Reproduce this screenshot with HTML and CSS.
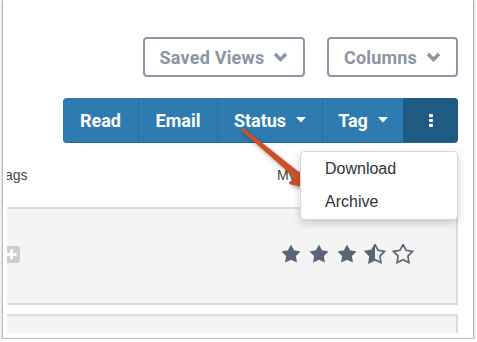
FILE: index.html
```html
<!DOCTYPE html>
<html lang="en">
<head>
  <meta charset="UTF-8">
  <meta name="viewport" content="width=device-width, initial-scale=1.0">
  <title>Responses</title>
  <link rel="stylesheet" href="styles.css">
</head>
<body>
  <div class="window">
    <div class="views">
      <button class="btn-outline saved">Saved Views
        <svg class="chev" width="15" height="10" viewBox="0 0 15 10"><polyline points="2,2 7.5,7.5 13,2"/></svg>
      </button>
      <button class="btn-outline cols">Columns
        <svg class="chev" width="15" height="10" viewBox="0 0 15 10"><polyline points="2,2 7.5,7.5 13,2"/></svg>
      </button>
    </div>

    <div class="actions">
      <div class="action-group">
        <div class="action read">Read</div>
        <div class="action email">Email</div>
        <div class="action status">Status
          <svg width="10" height="6" viewBox="0 0 10 6"><polygon points="0,0 10,0 5,5.5" fill="#fff"/></svg>
        </div>
        <div class="action tag">Tag
          <svg width="10" height="6" viewBox="0 0 10 6"><polygon points="0,0 10,0 5,5.5" fill="#fff"/></svg>
        </div>
        <div class="action more">
          <svg width="4" height="13" viewBox="0 0 4 13"><rect x="0" y="0" width="4" height="3.2" rx="0.8"/><rect x="0" y="4.9" width="4" height="3.2" rx="0.8"/><rect x="0" y="9.8" width="4" height="3.2" rx="0.8"/></svg>
        </div>
      </div>
      <ul class="menu">
        <li>Download</li>
        <li>Archive</li>
      </ul>
    </div>

    <div class="table">
      <div class="thead">
        <div class="col-tags">Tags</div>
        <div class="col-rating">My Rating</div>
      </div>
      <div class="row">
        <div class="col-tags">
          <svg class="add" width="17" height="17" viewBox="0 0 17 17"><rect width="17" height="17" rx="3" fill="#cdcdcd"/><path d="M8.5 3.5v10M3.5 8.5h10" stroke="#fff" stroke-width="3"/></svg>
        </div>
        <div class="col-rating">
          <svg class="stars" width="134" height="20" viewBox="0 0 134 20">
            <defs>
              <polygon id="star" points="10,0.5 13.06,6.29 19.51,7.41 14.95,12.11 15.88,18.59 10,15.7 4.12,18.59 5.05,12.11 0.49,7.41 6.94,6.29"/>
              <clipPath id="half"><rect x="0" y="0" width="10" height="20"/></clipPath>
            </defs>
            <use href="#star" x="0" class="full"/>
            <use href="#star" x="28" class="full"/>
            <use href="#star" x="56" class="full"/>
            <use href="#star" x="84" class="empty"/>
            <g transform="translate(84 0)"><use href="#star" class="full" clip-path="url(#half)"/></g>
            <use href="#star" x="112" class="empty"/>
          </svg>
        </div>
      </div>
      <div class="row short"></div>
    </div>
  </div>

  <svg class="pointer" width="477" height="342" viewBox="0 0 477 342">
    <polygon points="240.9,130.3 243.1,127.7 299.3,172.3 294.7,177.7" />
    <polygon points="289,184 305,165.5 313.5,190" />
  </svg>
</body>
</html>
```

FILE: styles.css
```css
body {
  margin: 0;
  background-color: #fff;
  position: relative;
  font-family: Roboto, "Liberation Sans", Arial, sans-serif;
}
.window {
  margin-left: 2px;
  width: 470px;
  height: 338px;
  border: 1px solid #b9b9b9;
  border-top: none;
  background-color: #fff;
  box-shadow: 0 1px 3px rgba(0, 0, 0, 0.25);
  overflow: hidden;
}
.views {
  display: flex;
  justify-content: flex-end;
  gap: 22px;
  padding: 37px 15px 0 0;
}
.btn-outline {
  height: 40px;
  box-sizing: border-box;
  border: 2px solid #8d97a6;
  border-radius: 4px;
  background: #fff;
  color: #8b95a4;
  font-family: Roboto, sans-serif;
  font-weight: 700;
  font-size: 18px;
  letter-spacing: 0.2px;
  padding: 0;
  display: flex;
  align-items: center;
  justify-content: center;
  gap: 9px;
}
.saved { width: 162px; }
.cols { width: 131px; }
.chev polyline {
  fill: none;
  stroke: #8b95a4;
  stroke-width: 3.4;
}
.actions {
  display: flex;
  justify-content: flex-end;
  margin: 21px 15px 0 0;
  position: relative;
}
.action-group {
  display: flex;
  height: 44px;
  background-color: #2d7bb1;
  border-radius: 4px;
  box-shadow: 0 1px 0 #23668f;
}
.action {
  display: flex;
  align-items: center;
  justify-content: center;
  gap: 10px;
  box-sizing: border-box;
  color: #fff;
  font-weight: 700;
  font-size: 18px;
  border-left: 1px solid #2670a2;
}
.read { width: 75px; border-left: none; }
.email { width: 79px; }
.status { width: 105px; }
.tag { width: 81px; }
.more {
  width: 55px;
  background-color: #1f5a83;
  border-left: none;
  border-radius: 0 4px 4px 0;
}
.more svg { fill: #fff; }
.menu {
  position: absolute;
  top: calc(100% + 9px);
  right: 0;
  width: 158px;
  box-sizing: border-box;
  margin: 0;
  padding: 0 0 1px;
  list-style: none;
  background-color: #fff;
  border: 1px solid #d6d6d6;
  border-radius: 4px;
  box-shadow: 0 3px 8px rgba(0, 0, 0, 0.18);
  z-index: 2;
}
.menu li {
  padding-left: 24px;
  line-height: 33px;
  font-family: "Liberation Sans", Arial, sans-serif;
  font-size: 16px;
  color: #333;
}
.table {
  margin: 0 15px 0 4px;
  overflow: hidden;
}
.thead {
  display: grid;
  grid-template-columns: 270px 1fr;
  height: 65px;
  align-items: center;
  font-family: "Liberation Sans", Arial, sans-serif;
  font-size: 14px;
  color: #444;
}
.thead .col-tags { margin-left: -9px; }
.row {
  display: grid;
  grid-template-columns: 270px 1fr;
  align-items: center;
  height: 98px;
  box-sizing: border-box;
  padding-bottom: 4px;
  background-color: #f4f4f4;
  border: 2px solid #dcdcdc;
  border-left: none;
}
.row.short {
  height: 19px;
  margin-top: 9px;
  border-bottom: none;
  padding: 0;
}
.add {
  display: block;
  margin-left: -4px;
}
.stars {
  display: block;
  margin-left: 4px;
}
.stars .full { fill: #5a6678; }
.stars .empty {
  fill: none;
  stroke: #5a6678;
  stroke-width: 1.7;
}
.pointer {
  position: absolute;
  top: 0;
  left: 0;
  pointer-events: none;
  fill: #cf4f27;
  filter: drop-shadow(1px 2px 2px rgba(0, 0, 0, 0.3));
}
```
